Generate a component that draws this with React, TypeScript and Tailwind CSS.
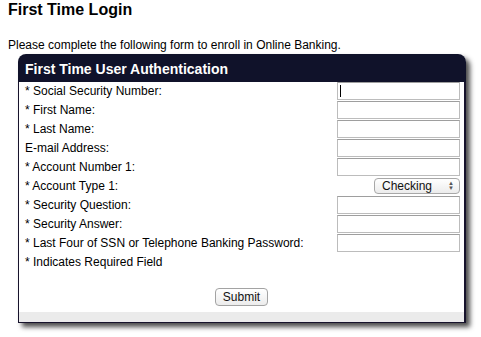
const rows = [
  { label: "* Social Security Number:", kind: "input", focus: true },
  { label: "* First Name:", kind: "input" },
  { label: "* Last Name:", kind: "input" },
  { label: "E-mail Address:", kind: "input" },
  { label: "* Account Number 1:", kind: "input" },
  { label: "* Account Type 1:", kind: "select" },
  { label: "* Security Question:", kind: "input" },
  { label: "* Security Answer:", kind: "input" },
  { label: "* Last Four of SSN or Telephone Banking Password:", kind: "input" },
  { label: "* Indicates Required Field", kind: "none" },
];

function TextBox({ focus }: { focus?: boolean }) {
  return (
    <div className="relative h-[18px] w-[123px] border border-[#bcbcbc] border-t-[#9e9e9e] bg-white">
      {focus && <span className="absolute left-[2px] top-[2px] h-[12px] w-px bg-black" />}
    </div>
  );
}

function SelectBox() {
  return (
    <div className="mt-px flex h-[16px] w-[86px] items-center justify-between rounded-[4px] border border-[#a8a8a8] bg-gradient-to-b from-white to-[#ececec] pl-[7px] pr-[5px] text-[12px] leading-none text-[#111]">
      <span>Checking</span>
      <span className="flex flex-col items-center text-[6px] leading-[5px] text-[#555]">
        <span>▲</span>
        <span>▼</span>
      </span>
    </div>
  );
}

export default function App() {
  return (
    <div className="h-[337px] w-[481px] bg-white font-['Liberation_Sans',Arial,sans-serif] text-black">
      <h1 className="ml-[8px] pt-px text-[16px] font-bold leading-[18px]">First Time Login</h1>
      <p className="ml-[8px] mt-[19px] text-[12px] leading-[14px]">
        Please complete the following form to enroll in Online Banking.
      </p>

      <div className="ml-[18px] mt-[2px] w-[448px] rounded-t-[8px] shadow-[4px_4px_5px_rgba(0,0,0,0.7)]">
        <div className="h-[28px] rounded-t-[8px] bg-[#10122a] pl-[7px] pt-[7px] text-[14px] font-bold leading-[16px] text-white">
          First Time User Authentication
        </div>
        <div className="border-b border-l border-r-2 border-[#17132c] bg-white">
          <div className="pl-[6px] pr-[4px]">
            {rows.map((r) => (
              <div key={r.label} className="flex h-[19px] items-start justify-between">
                <span className="text-[12px] leading-[19px]">{r.label}</span>
                {r.kind === "input" && <TextBox focus={r.focus} />}
                {r.kind === "select" && <SelectBox />}
              </div>
            ))}
          </div>
          <div className="flex justify-center pb-[6px] pt-[16px]">
            <button className="h-[18px] w-[53px] rounded-[4px] border border-[#a3a3a3] bg-gradient-to-b from-white to-[#ececec] text-[12px] leading-none text-[#111]">
              Submit
            </button>
          </div>
          <div className="h-[10px] bg-[#ebebeb]" />
        </div>
      </div>
    </div>
  );
}
